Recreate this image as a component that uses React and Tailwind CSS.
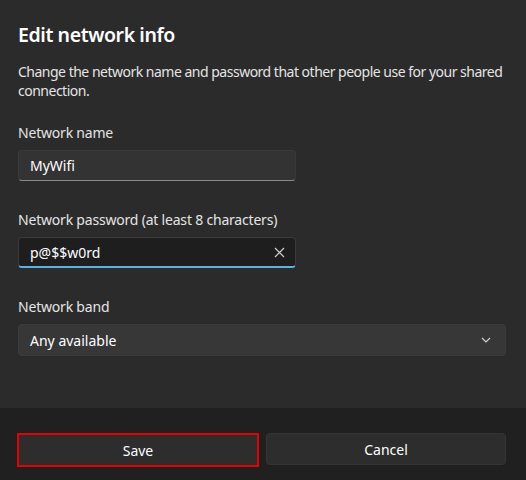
const App = () => {
  return (
    <div
      className="w-[526px] h-[480px] flex flex-col bg-[#2b2b2b] text-white"
      style={{ fontFamily: '"Noto Sans", "Open Sans", sans-serif' }}
    >
      {/* Body */}
      <div className="flex-1 px-[18px] pt-[21px]">
        <h1 className="text-[19.5px] font-semibold leading-[28px] tracking-[-0.4px]">Edit network info</h1>
        <p className="mt-[13px] w-[492px] text-[14px] leading-[19px] tracking-[-0.5px] text-[#e4e4e4]">
          Change the network name and password that other people use for your shared
          connection.
        </p>

        {/* Network name */}
        <div className="mt-[23px]">
          <label className="block text-[14px] leading-[20px] tracking-[-0.2px] text-[#e4e4e4]">Network name</label>
          <div className="mt-[7px] w-[278px] h-[31px] flex items-center px-[11px] rounded-[4px] bg-[#333333] border border-[#3a3a3a] border-b-[#8a8a8a]">
            <span className="text-[14px]">MyWifi</span>
          </div>
        </div>

        {/* Network password */}
        <div className="mt-[29px]">
          <label className="block text-[14px] leading-[20px] tracking-[-0.2px] text-[#e4e4e4]">
            Network password (at least 8 characters)
          </label>
          <div className="mt-[7px] w-[278px] h-[31px] flex items-center justify-between pl-[11px] pr-[10px] rounded-[4px] bg-[#1e1e1e] border border-[#3a3a3a] border-b-2 border-b-[#5bb2e6]">
            <span className="text-[14px]">p@$$w0rd</span>
            <svg width="11" height="11" viewBox="0 0 11 11" className="text-[#cfcfcf]">
              <path d="M1 1L10 10M10 1L1 10" stroke="currentColor" strokeWidth="1.2" />
            </svg>
          </div>
        </div>

        {/* Network band */}
        <div className="mt-[29px]">
          <label className="block text-[14px] leading-[20px] tracking-[-0.2px] text-[#e4e4e4]">Network band</label>
          <div className="mt-[7px] w-[488px] h-[32px] flex items-center justify-between pl-[11px] pr-[14px] rounded-[4px] bg-[#373737] border border-[#3c3c3c]">
            <span className="text-[14px]">Any available</span>
            <svg width="10" height="6" viewBox="0 0 10 6" className="text-[#d0d0d0]">
              <path d="M1 1L5 5L9 1" fill="none" stroke="currentColor" strokeWidth="1.2" />
            </svg>
          </div>
        </div>
      </div>

      {/* Footer */}
      <div className="h-[72px] bg-[#202020] flex items-start gap-[7px] px-[17px] pt-[25px]">
        <button className="w-[242px] h-[34px] bg-[#2d2d2d] border-2 border-[#e60000] text-[14px]">
          Save
        </button>
        <button className="w-[240px] h-[32px] rounded-[4px] bg-[#2d2d2d] border border-[#353535] text-[14px]">
          Cancel
        </button>
      </div>
    </div>
  );
};

export default App;
